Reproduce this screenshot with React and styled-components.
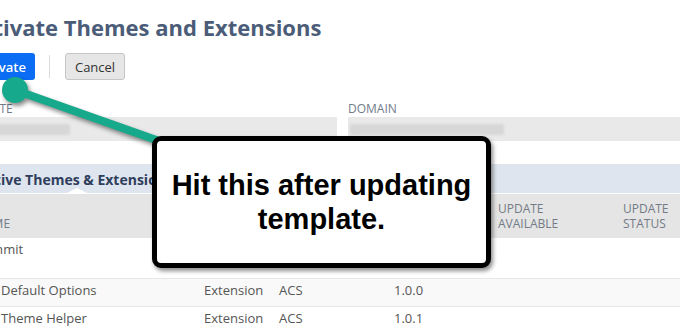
import React from 'react';
import styled, { createGlobalStyle } from 'styled-components';

const Global = createGlobalStyle`
  html, body { margin: 0; padding: 0; background: #fff; }
  body { font-family: "Open Sans", "Liberation Sans", sans-serif; }
`;

const Viewport = styled.div`
  position: relative;
  width: 680px;
  height: 334px;
  overflow: hidden;
  background: #fff;
`;

const Page = styled.div`
  margin-left: -40px;
  width: 780px;
  padding-top: 12px;
`;

const Title = styled.h1`
  margin: 0 0 0 7px;
  font-size: 22px;
  line-height: 30px;
  font-weight: 700;
  color: #4b5c78;
  white-space: nowrap;
`;

const ButtonRow = styled.div`
  display: flex;
  align-items: center;
  margin-top: 11px;
  padding-left: 6px;
  height: 27px;
`;

const Button = styled.button`
  box-sizing: border-box;
  height: 27px;
  padding: 0 9px;
  border-radius: 3px;
  border: ${p => (p.$primary ? 'none' : '1px solid #c6c6c6')};
  background: ${p => (p.$primary ? '#0b6cf4' : '#e6e6e6')};
  color: ${p => (p.$primary ? '#fff' : '#333')};
  font-family: "Open Sans", sans-serif;
  font-size: 13px;
  font-weight: ${p => (p.$primary ? 600 : 400)};
`;

const Divider = styled.span`
  width: 1px;
  height: 23px;
  background: #dcdcdc;
  margin: 0 15px 0 14px;
`;

const Form = styled.div`
  display: grid;
  grid-template-columns: 373px 373px;
  column-gap: 11px;
  margin-top: 21px;
  padding-left: 4px;
`;

const Field = styled.div`
  display: flex;
  flex-direction: column;
`;

const Label = styled.label`
  font-size: 12px;
  line-height: 16px;
  color: #717c8a;
  text-transform: uppercase;
`;

const Select = styled.div`
  height: 24px;
  background: #e9e9e9;
  padding: 7px 0 0 2px;
  box-sizing: border-box;
`;

const Blurred = styled.div`
  height: 11px;
  background: #d7d7d7;
  border-radius: 2px;
  filter: blur(1.2px);
`;

const Section = styled.section`
  margin-top: 23px;
`;

const SectionHeader = styled.div`
  position: relative;
  box-sizing: border-box;
  height: 30px;
  padding: 2px 0 0 18px;
  line-height: 27px;
  background: #dfe5ee;
  border-bottom: 1px solid #fff;
  font-size: 14px;
  font-weight: 700;
  color: #2f3e5c;
  white-space: nowrap;
  &::after {
    content: "";
    position: absolute;
    left: 107px;
    bottom: 0;
    border-left: 10px solid transparent;
    border-right: 10px solid transparent;
    border-bottom: 5px solid #fff;
  }
`;

const columns = '228px 75px 115px 104px 125px 1fr';

const HeadRow = styled.div`
  display: grid;
  grid-template-columns: ${columns};
  align-items: end;
  box-sizing: border-box;
  height: 44px;
  padding: 0 0 7px 8px;
  background: #e5e5e5;
`;

const Th = styled.div`
  padding-left: 8px;
  font-size: 12px;
  line-height: 15px;
  color: #737b87;
  text-transform: uppercase;
`;

const Row = styled.div`
  display: grid;
  grid-template-columns: ${columns};
  align-items: start;
  box-sizing: border-box;
  height: ${p => (p.$tall ? 41 : 28)}px;
  padding: 2px 0 0 8px;
  background: ${p => (p.$striped ? '#f9f9f9' : '#fff')};
  border-bottom: 1px solid #e6e6e6;
`;

const Td = styled.div`
  padding-left: ${p => 8 + (p.$indent || 0)}px;
  font-size: 13px;
  line-height: 18px;
  color: #555;
  white-space: nowrap;
`;

const Overlay = styled.svg`
  position: absolute;
  left: 0;
  top: 0;
  z-index: 1;
  filter: drop-shadow(2px 3px 2px rgba(0, 0, 0, 0.45));
`;

const Callout = styled.div`
  position: absolute;
  left: 152px;
  top: 136px;
  z-index: 2;
  box-sizing: border-box;
  width: 339px;
  height: 132px;
  border: 5px solid #000;
  border-radius: 9px;
  background: #fff;
  box-shadow: 2px 3px 4px rgba(0, 0, 0, 0.45);
  display: flex;
  align-items: center;
  justify-content: center;
  text-align: center;
  font-family: "Liberation Sans", Arial, sans-serif;
  font-weight: 700;
  font-size: 29px;
  line-height: 34px;
  color: #000;
`;

const rows = [
  { name: 'Summit', type: 'Theme', vendor: 'SuiteCommerce', version: '', tall: true },
  { name: 'Default Options', type: 'Extension', vendor: 'ACS', version: '1.0.0', indent: 25, striped: true },
  { name: 'Theme Helper', type: 'Extension', vendor: 'ACS', version: '1.0.1', indent: 25 },
];

export default function App() {
  return (
    <Viewport>
      <Global />
      <Page>
        <Title>Activate Themes and Extensions</Title>
        <ButtonRow>
          <Button $primary>Activate</Button>
          <Divider />
          <Button>Cancel</Button>
        </ButtonRow>
        <Form>
          <Field>
            <Label>Website</Label>
            <Select><Blurred style={{ width: 104 }} /></Select>
          </Field>
          <Field>
            <Label>Domain</Label>
            <Select><Blurred style={{ width: 154 }} /></Select>
          </Field>
        </Form>
        <Section>
          <SectionHeader>Active Themes &amp; Extensions</SectionHeader>
          <HeadRow>
            <Th>Name</Th>
            <Th>Type</Th>
            <Th>Vendor</Th>
            <Th>Version</Th>
            <Th>Update<br />Available</Th>
            <Th>Update<br />Status</Th>
          </HeadRow>
          {rows.map(r => (
            <Row key={r.name} $tall={r.tall} $striped={r.striped}>
              <Td $indent={r.indent}>{r.name}</Td>
              <Td>{r.type}</Td>
              <Td>{r.vendor}</Td>
              <Td>{r.version}</Td>
              <Td />
              <Td />
            </Row>
          ))}
        </Section>
      </Page>
      <Overlay width="680" height="334" viewBox="0 0 680 334">
        <line x1="15" y1="90" x2="162" y2="142" stroke="#17a98b" strokeWidth="8" />
        <circle cx="15" cy="90" r="13" fill="#17a98b" />
      </Overlay>
      <Callout>
        Hit this after updating
        <br />
        template.
      </Callout>
    </Viewport>
  );
}
